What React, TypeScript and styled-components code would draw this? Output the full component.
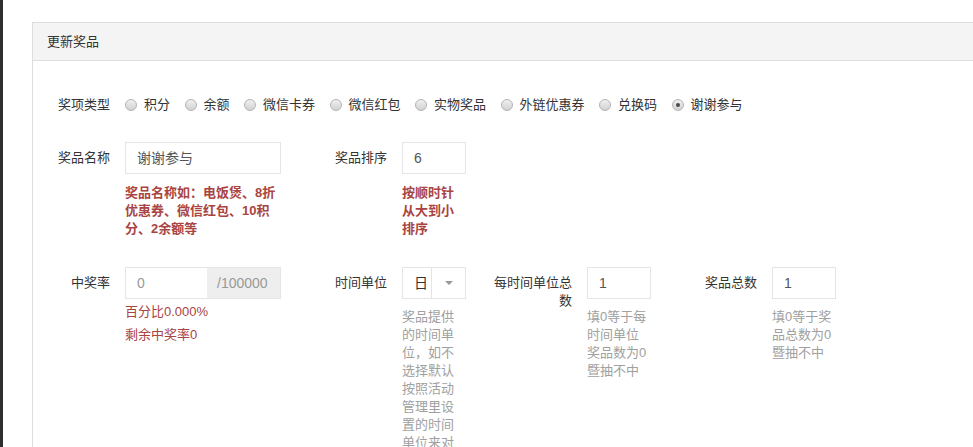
import React from "react";
import styled, { createGlobalStyle } from "styled-components";

const GlobalStyle = createGlobalStyle`
  html, body {
    margin: 0;
    padding: 0;
    background: #fff;
    overflow: hidden;
  }
  body {
    font-family: "Liberation Sans", "Noto Sans CJK SC", sans-serif;
    font-size: 13px;
    color: #333;
  }
`;

const Page = styled.div`
  display: flex;
  height: 447px;
  overflow: hidden;
`;

const Strip = styled.div`
  flex: 0 0 3px;
  background: #2e2e2e;
`;

const Main = styled.div`
  flex: 1;
  padding: 22px 0 0 29px;
  min-width: 0;
`;

const Panel = styled.div`
  width: 1100px;
  border: 1px solid #ddd;
  border-bottom: none;
  min-height: 500px;
`;

const PanelHeader = styled.div`
  background: #f4f4f4;
  border-bottom: 1px solid #ddd;
  padding: 10px 14px 9px;
  line-height: 18px;
  color: #333;
`;

const PanelBody = styled.div`
  padding: 34px 15px 0;
`;

const Row = styled.div<{ $top?: number }>`
  display: flex;
  align-items: flex-start;
  margin-top: ${({ $top }) => $top ?? 0}px;
`;

const Label = styled.div<{ $width: number; $padLeft?: number; $padTop?: number }>`
  flex: 0 0 ${({ $width }) => $width}px;
  box-sizing: border-box;
  padding: ${({ $padTop }) => $padTop ?? 7}px 15px 0 ${({ $padLeft }) => $padLeft ?? 0}px;
  text-align: right;
  line-height: 18px;
  color: #333;
`;

const Control = styled.div<{ $width: number }>`
  flex: 0 0 ${({ $width }) => $width}px;
  width: ${({ $width }) => $width}px;
`;

const RadioList = styled.div`
  display: flex;
  align-items: center;
  line-height: 20px;
`;

const RadioOption = styled.label`
  display: flex;
  align-items: center;
  margin-right: 14.5px;
  color: #333;
`;

const RadioDot = styled.span<{ $checked?: boolean }>`
  position: relative;
  width: 10px;
  height: 10px;
  border-radius: 50%;
  border: 1px solid #b4b4b4;
  background: linear-gradient(#f0f0f0, #d2d2d2);
  margin-right: 7px;
  &::after {
    content: "";
    display: ${({ $checked }) => ($checked ? "block" : "none")};
    position: absolute;
    left: 3px;
    top: 3px;
    width: 4px;
    height: 4px;
    border-radius: 50%;
    background: #4a4a4a;
  }
`;

const TextBox = styled.div<{ $muted?: boolean }>`
  box-sizing: border-box;
  height: 32px;
  border: 1px solid #e5e5e5;
  padding: 0 11px;
  line-height: 30px;
  font-size: 14px;
  color: ${({ $muted }) => ($muted ? "#999" : "#555")};
  background: #fff;
`;

const InputGroup = styled.div`
  display: flex;
  height: 32px;
  box-sizing: border-box;
  border: 1px solid #e5e5e5;
`;

const GroupInput = styled.div`
  flex: 0 0 81px;
  padding: 0 11px;
  box-sizing: border-box;
  line-height: 30px;
  font-size: 14px;
  color: #999;
`;

const Addon = styled.div`
  flex: 1;
  background: #eee;
  padding-left: 10px;
  line-height: 30px;
  font-size: 14px;
  color: #999;
`;

const Select = styled.div`
  display: flex;
  height: 32px;
  box-sizing: border-box;
  border: 1px solid #e5e5e5;
`;

const SelectValue = styled.div`
  flex: 0 0 29px;
  box-sizing: border-box;
  padding-left: 11px;
  line-height: 30px;
  font-size: 14px;
  color: #333;
  border-right: 1px solid #e5e5e5;
`;

const SelectArrow = styled.div`
  flex: 1;
  display: flex;
  align-items: center;
  justify-content: center;
  &::before {
    content: "";
    border-left: 4px solid transparent;
    border-right: 4px solid transparent;
    border-top: 4px solid #999;
  }
`;

const Help = styled.div<{ $tone: "error" | "muted"; $bold?: boolean; $top: number }>`
  margin-top: ${({ $top }) => $top}px;
  line-height: 18px;
  color: ${({ $tone }) => ($tone === "error" ? "#a94442" : "#a0a0a0")};
  font-weight: ${({ $bold }) => ($bold ? 700 : 400)};
  word-break: break-all;
`;

const prizeTypes = ["积分", "余额", "微信卡券", "微信红包", "实物奖品", "外链优惠券", "兑换码", "谢谢参与"];

export default function App() {
  return (
    <>
      <GlobalStyle />
      <Page>
        <Strip />
        <Main>
          <Panel>
            <PanelHeader>更新奖品</PanelHeader>
            <PanelBody>
              <Row>
                <Label $width={77} $padTop={1}>奖项类型</Label>
                <RadioList>
                  {prizeTypes.map((t) => (
                    <RadioOption key={t}>
                      <RadioDot $checked={t === "谢谢参与"} />
                      {t}
                    </RadioOption>
                  ))}
                </RadioList>
              </Row>

              <Row $top={27}>
                <Label $width={77}>奖品名称</Label>
                <Control $width={156}>
                  <TextBox>谢谢参与</TextBox>
                  <Help $tone="error" $bold $top={10}>
                    奖品名称如：电饭煲、8折优惠券、微信红包、10积分、2余额等
                  </Help>
                </Control>
                <Label $width={121}>奖品排序</Label>
                <Control $width={64}>
                  <TextBox>6</TextBox>
                  <Help $tone="error" $bold $top={10}>
                    按顺时针从大到小排序
                  </Help>
                </Control>
              </Row>

              <Row $top={29}>
                <Label $width={77}>中奖率</Label>
                <Control $width={156}>
                  <InputGroup>
                    <GroupInput>0</GroupInput>
                    <Addon>/100000</Addon>
                  </InputGroup>
                  <Help $tone="error" $top={4}>百分比0.000%</Help>
                  <Help $tone="error" $top={5}>剩余中奖率0</Help>
                </Control>
                <Label $width={121}>时间单位</Label>
                <Control $width={64}>
                  <Select>
                    <SelectValue>日</SelectValue>
                    <SelectArrow />
                  </Select>
                  <Help $tone="muted" $top={9}>
                    奖品提供的时间单位，如不选择默认按照活动管理里设置的时间单位来对奖品进行限制
                  </Help>
                </Control>
                <Label $width={121} $padLeft={25}>每时间单位总数</Label>
                <Control $width={64}>
                  <TextBox>1</TextBox>
                  <Help $tone="muted" $top={9}>填0等于每时间单位奖品数为0暨抽不中</Help>
                </Control>
                <Label $width={121}>奖品总数</Label>
                <Control $width={64}>
                  <TextBox>1</TextBox>
                  <Help $tone="muted" $top={9}>填0等于奖品总数为0暨抽不中</Help>
                </Control>
              </Row>
            </PanelBody>
          </Panel>
        </Main>
      </Page>
    </>
  );
}
